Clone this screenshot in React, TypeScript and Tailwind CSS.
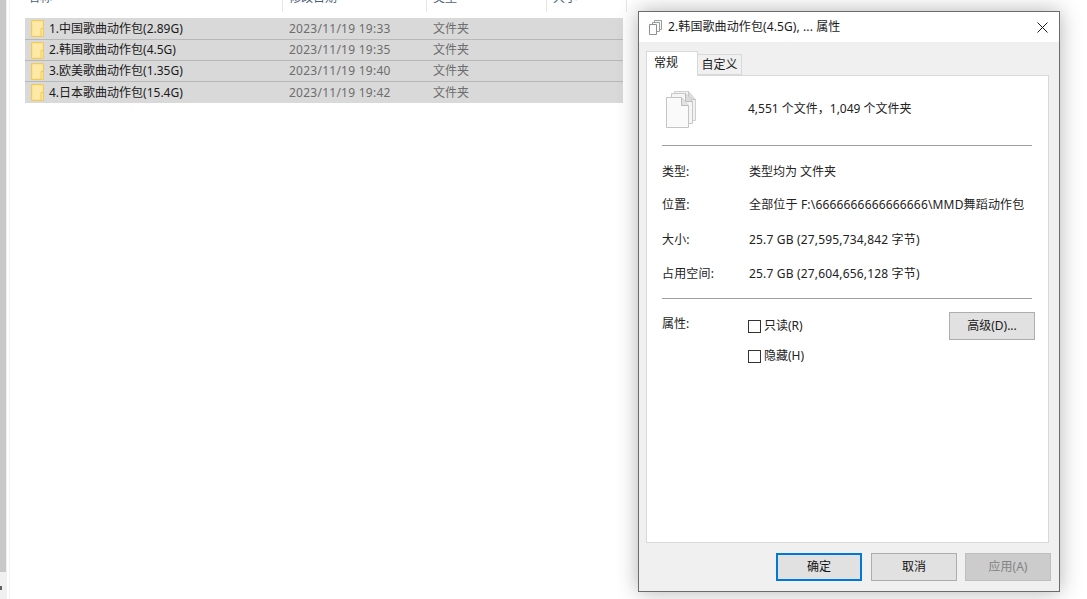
const font = { fontFamily: '"Noto Sans", "Noto Sans CJK SC", sans-serif' };

const folders = [
  { name: "1.中国歌曲动作包(2.89G)", date: "2023/11/19 19:33" },
  { name: "2.韩国歌曲动作包(4.5G)", date: "2023/11/19 19:35" },
  { name: "3.欧美歌曲动作包(1.35G)", date: "2023/11/19 19:40" },
  { name: "4.日本歌曲动作包(15.4G)", date: "2023/11/19 19:42" },
];

const details = [
  { label: "类型:", value: "类型均为 文件夹", cls: "h-[33px]" },
  { label: "位置:", value: "全部位于 F:\\6666666666666666\\MMD舞蹈动作包", cls: "h-[34px] tracking-[0.17px]" },
  { label: "大小:", value: "25.7 GB (27,595,734,842 字节)", cls: "h-[35px] tracking-[0.17px]" },
  { label: "占用空间:", value: "25.7 GB (27,604,656,128 字节)", cls: "h-[34px] tracking-[0.17px]" },
];

function FolderIcon() {
  return (
    <svg width="13" height="17" viewBox="0 0 13 17" className="shrink-0">
      <path d="M.5.5h12v16H.5z" fill="#fde38f" stroke="#eecb5c" />
      <path d="M2 2h9v13H2z" fill="#fee9a6" />
      <path d="M10 16.5V8.5h2.5" fill="none" stroke="#eecb5c" />
    </svg>
  );
}

function SmallFilesIcon() {
  return (
    <svg width="13" height="15" viewBox="0 0 13 15" className="shrink-0">
      <path d="M5.5.5h7v9h-7z" fill="#fafafa" stroke="#9c9c9c" />
      <path d="M3.5 2.5h7v9h-7z" fill="#fafafa" stroke="#9c9c9c" />
      <path d="M.5 4.5h7v10h-7z" fill="#fdfdfd" stroke="#8f8f8f" />
    </svg>
  );
}

function PagesIcon() {
  return (
    <svg width="30" height="37" viewBox="0 0 30 37" className="shrink-0">
      <path d="M8.5.5h14l7 8v21h-21z" fill="#f2f2f2" stroke="#cfcfcf" />
      <path d="M22.5.5v8h7" fill="#dcdcdc" stroke="#c4c4c4" />
      <path d="M5.5 2.5h14l7 8v22h-21z" fill="#f5f5f5" stroke="#c8c8c8" />
      <path d="M19.5 2.5v8h7" fill="#dcdcdc" stroke="#bdbdbd" />
      <path d="M.5 6.5h15l7 8v22H.5z" fill="#fafafa" stroke="#c4c4c4" />
      <path d="M15.5 6.5v8h7" fill="#e2e2e2" stroke="#bdbdbd" />
    </svg>
  );
}

function DialogButton({ label, cls }: { label: string; cls: string }) {
  return (
    <button className={`flex h-[28px] w-[86px] items-center justify-center text-[12px] ${cls}`}>
      {label}
    </button>
  );
}

function CheckRow({ label }: { label: string }) {
  return (
    <label className="flex h-[30px] items-center">
      <span className="h-[13px] w-[13px] border border-[#333333] bg-white" />
      <span className="ml-[3px] text-[12px] text-[#222222]">{label}</span>
    </label>
  );
}

export default function App() {
  return (
    <div className="relative flex h-[599px] w-[1087px] overflow-hidden bg-white" style={font}>
      {/* scrollbar at the far left */}
      <div className="relative flex h-full w-[7px] flex-col bg-[#f0f0f0]">
        <div className="h-[572px] w-[6px] bg-[#c8c8c8]" />
        <div className="absolute bottom-[9px] left-0 h-[4px] w-[2px] bg-[#606060]" />
      </div>
      <div className="ml-[2px] h-full w-px bg-[#f3f3f3]" />

      {/* explorer list */}
      <div className="flex flex-col">
        <div className="flex h-[12px] text-[12px] leading-[12px] text-[#4c607a]">
          <div className="h-full w-[273px] overflow-hidden border-r border-[#e5e5e5] pl-[18px]">
            <div className="-mt-[8px]">名称</div>
          </div>
          <div className="h-full w-[144px] overflow-hidden border-r border-[#e5e5e5] pl-[6px]">
            <div className="-mt-[8px]">修改日期</div>
          </div>
          <div className="h-full w-[120px] overflow-hidden border-r border-[#e5e5e5] pl-[6px]">
            <div className="-mt-[8px]">类型</div>
          </div>
          <div className="h-full w-[80px] overflow-hidden border-r border-[#e5e5e5] pl-[6px]">
            <div className="-mt-[8px]">大小</div>
          </div>
        </div>
        <div className="ml-[15px] mt-[6px] w-[598px]">
          {folders.map((f, i) => (
            <div
              key={f.name}
              className={`flex items-center bg-[#d9d9d9] text-[12px] ${i === 0 ? "h-[22px]" : "h-[21px]"} ${i < 3 ? "border-b border-[#b8b8b8]" : ""}`}
            >
              <div className="flex w-[264px] items-center pl-[6px]">
                <FolderIcon />
                <span className="ml-[5px] whitespace-nowrap text-[#1a1a1a]">{f.name}</span>
              </div>
              <div className="w-[144px] whitespace-nowrap tracking-[0.25px] text-[#6d6d6d]">{f.date}</div>
              <div className="text-[#6d6d6d]">文件夹</div>
            </div>
          ))}
        </div>
      </div>

      {/* properties dialog */}
      <div className="absolute left-[638px] top-[11px] flex h-[581px] w-[422px] flex-col border border-[#6b6b6b] bg-[#f0f0f0] shadow-[0_0_20px_rgba(0,0,0,0.3)]">
        <div className="flex h-[30px] items-center bg-white pl-[10px] pr-[11px]">
          <SmallFilesIcon />
          <span className="ml-[6px] text-[12px] tracking-[0.1px] text-[#1a1a1a]">2.韩国歌曲动作包(4.5G), ... 属性</span>
          <svg width="11" height="11" viewBox="0 0 11 11" className="ml-auto">
            <path d="M.5.5l10 10M10.5.5l-10 10" stroke="#1a1a1a" fill="none" />
          </svg>
        </div>

        <div className="ml-[7px] mr-[10px] flex flex-1 flex-col pt-[9px]">
          <div className="flex h-[25px] items-end">
            <div className="relative z-10 flex h-[25px] w-[52px] items-start border border-b-0 border-[#d9d9d9] bg-white pl-[7px] pt-[2px] text-[12px] text-[#1a1a1a]">
              常规
            </div>
            <div className="mb-px flex h-[21px] w-[44px] items-center justify-center border border-l-0 border-[#d9d9d9] bg-[#f0f0f0] text-[12px] text-[#1a1a1a]">
              自定义
            </div>
          </div>

          <div className="-mt-px flex h-[468px] flex-col border border-[#d9d9d9] bg-white px-[15px] text-[12px] text-[#222222]">
            <div className="flex h-[69px] items-center pb-[3px]">
              <div className="ml-[4px] w-[82px]">
                <PagesIcon />
              </div>
              <span>4,551 个文件，1,049 个文件夹</span>
            </div>
            <div className="h-px w-[370px] bg-[#a0a0a0]" />
            <div className="pt-[9px]">
              {details.map((d) => (
                <div key={d.label} className={`flex items-center ${d.cls}`}>
                  <span className="w-[87px] shrink-0">{d.label}</span>
                  <span className="whitespace-nowrap">{d.value}</span>
                </div>
              ))}
            </div>
            <div className="mt-[7px] h-px w-[370px] bg-[#a0a0a0]" />
            <div className="flex pt-[13px]">
              <span className="w-[86px] shrink-0 pt-[3px]">属性:</span>
              <div className="-mt-px flex flex-col">
                <CheckRow label="只读(R)" />
                <CheckRow label="隐藏(H)" />
              </div>
              <DialogButton
                label="高级(D)..."
                cls="ml-auto -mr-[2px] border border-[#adadad] bg-[#e1e1e1] text-[#1a1a1a]"
              />
            </div>
          </div>

          <div className="-mr-[2px] flex flex-1 items-center justify-end">
            <DialogButton label="确定" cls="mr-[9px] border-2 border-[#0078d7] bg-[#e1e1e1] text-[#111111]" />
            <DialogButton label="取消" cls="mr-[8px] border border-[#adadad] bg-[#e1e1e1] text-[#111111]" />
            <DialogButton label="应用(A)" cls="border border-[#bfbfbf] bg-[#cccccc] text-[#838383]" />
          </div>
        </div>
      </div>
    </div>
  );
}
